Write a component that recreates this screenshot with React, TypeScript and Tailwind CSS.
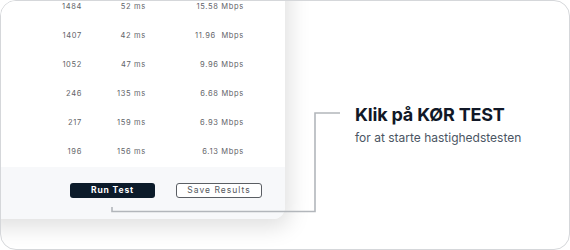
const rows = [
  { n: "1484", ping: "52 ms", speed: "15.58 Mbps" },
  { n: "1407", ping: "42 ms", speed: "11.96  Mbps" },
  { n: "1052", ping: "47 ms", speed: "9.96 Mbps" },
  { n: "246", ping: "135 ms", speed: "6.68 Mbps" },
  { n: "217", ping: "159 ms", speed: "6.93 Mbps" },
  { n: "196", ping: "156 ms", speed: "6.13 Mbps" },
];

export default function App() {
  return (
    <div className="p-0 bg-white" style={{ fontFamily: "Inter, 'Liberation Sans', sans-serif" }}>
      <div className="relative flex items-start w-[570px] h-[250px] overflow-hidden rounded-[16px] border border-[#d5d7da] bg-white">
        {/* results card */}
        <div className="-ml-[21px] -mt-[41px] w-[305px] shrink-0 overflow-hidden rounded-br-[12px] bg-white shadow-[4px_8px_22px_rgba(0,0,0,0.13)]">
          <div className="pt-[32px] pb-[1px]">
            {rows.map((r) => (
              <div
                key={r.n}
                className="flex h-[29px] items-center whitespace-pre text-[7.5px] tracking-[0.09em] text-[#5f6368]"
              >
                <span className="w-[102px] text-right">{r.n}</span>
                <span className="w-[64px] text-right">{r.ping}</span>
                <span className="w-[98px] text-right">{r.speed}</span>
              </div>
            ))}
          </div>
          <div className="flex h-[52px] items-start gap-[21px] bg-[#f7f8fa] pl-[90px] pt-[16px]">
            <button className="flex h-[15px] w-[85px] items-center justify-center rounded-[3px] bg-[#0c1b2a] text-[8.5px] font-bold tracking-[0.1em] text-white">
              Run Test
            </button>
            <button className="flex h-[15px] w-[86px] items-center justify-center rounded-[3px] border border-[#5a5e63] bg-white text-[8.5px] tracking-[0.12em] text-[#55595e]">
              Save Results
            </button>
          </div>
        </div>

        {/* callout text */}
        <div className="ml-[70px] mt-[103px]">
          <div className="text-[18px] leading-[22px] font-bold text-[#111827] tracking-[-0.01em]">
            Klik på KØR TEST
          </div>
          <div className="mt-[4px] text-[12px] leading-[16px] text-[#4b5563]">
            for at starte hastighedstesten
          </div>
        </div>

        {/* connector line */}
        <svg className="pointer-events-none absolute left-[-1px] top-[-1px]" width="570" height="250">
          <path d="M112 207 V211.5 H315 V113 H340" fill="none" stroke="#b2b6bb" strokeWidth="1.6" />
        </svg>
      </div>
    </div>
  );
}
